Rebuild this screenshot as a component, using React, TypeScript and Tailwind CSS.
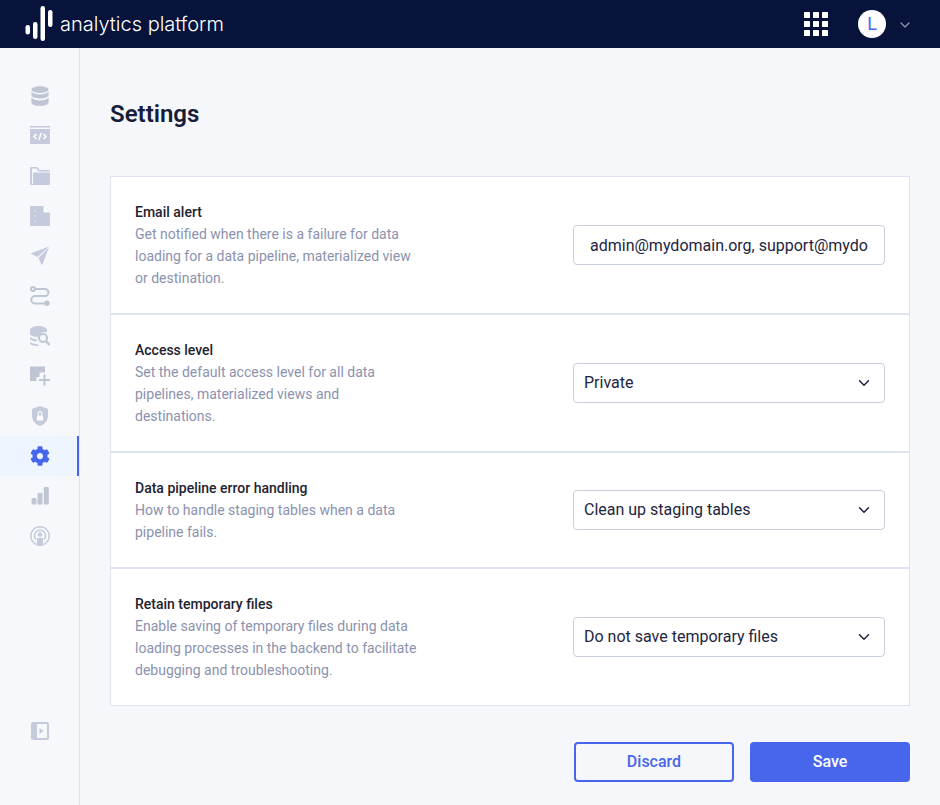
import { FaCog } from "react-icons/fa";
import { ChevronDown } from "lucide-react";

function DbIcon() {
  return (
    <svg width="20" height="20" viewBox="0 0 20 20" fill="#bfc5d2">
      <ellipse cx="10" cy="3.6" rx="8.6" ry="3.4" />
      <path d="M1.4 5.6c1.4 2 4.8 3 8.6 3s7.2-1 8.600-3v3.400c0 1.900-3.800 3.400-8.600 3.400S1.400 10.900 1.400 9z" />
      <path d="M1.400 11.600c1.400 2 4.800 3 8.600 3s7.200-1 8.600-3v4.800c0 1.900-3.800 3.400-8.600 3.400s-8.600-1.500-8.600-3.400z" />
    </svg>
  );
}

function CodeIcon() {
  return (
    <svg width="20" height="20" viewBox="0 0 20 20">
      <rect x="0" y="0" width="20" height="1.500" fill="#c5cadc" />
      <rect x="0" y="3" width="20" height="15" fill="#c5cadc" />
      <path d="M6.500 8 4 10.500 6.500 13M13.500 8 16 10.500 13.500 13M11.200 7 8.800 14" fill="none" stroke="#fff" strokeWidth="1.500" />
    </svg>
  );
}

function FolderIcon() {
  return (
    <svg width="20" height="20" viewBox="0 0 20 20" fill="#c5cadc">
      <path d="M1 1h6.500l2 3H19a1 1 0 0 1 1 1v.5H8.500l-2-3H2v-.5H1z" />
      <path d="M0 2a1 1 0 0 1 1-1h1v17h17a1 1 0 0 1-1 1H1a1 1 0 0 1-1-1z" />
      <path d="M3 6.500h16a1 1 0 0 1 1 1V18a1 1 0 0 1-1 1H3z" />
    </svg>
  );
}

function FileIcon() {
  return (
    <svg width="20" height="20" viewBox="0 0 20 20">
      <path d="M1.500 0H13l7 7v11.500a1.500 1.500 0 0 1-1.500 1.500h-17A1.500 1.500 0 0 1 0 18.500v-17A1.500 1.500 0 0 1 1.500 0z" fill="#c5cadc" />
      <path d="M13.500 0v6.500H20z" fill="#f7f8fc" />
      <path d="M14 1.500v4.500h4.500z" fill="#fff" />
      <rect x="4.600" y="4.600" width="1.100" height="1.100" fill="#fff" />
      <rect x="4.600" y="9.300" width="1.100" height="1.100" fill="#fff" />
      <rect x="4.600" y="14.400" width="1.100" height="1.100" fill="#fff" />
    </svg>
  );
}

function SendIcon() {
  return (
    <svg width="20" height="20" viewBox="0 0 20 20" fill="#c5cadc">
      <path d="M19 0.500 0.500 7.500l7 3.500L19 0.500zM19.200 1 8.500 12l3.500 7.500z" />
    </svg>
  );
}

function PipelineIcon() {
  return (
    <svg width="20" height="20" viewBox="0 0 20 20" fill="none" stroke="#bfc5d2" strokeWidth="2">
      <circle cx="3" cy="3" r="2" />
      <path d="M5 3h10a3.500 3.500 0 0 1 0 7H5a3.700 3.700 0 0 0 0 7.500h11" />
      <circle cx="17" cy="17.300" r="2.700" fill="#bfc5d2" stroke="none" />
    </svg>
  );
}

function SearchDbIcon() {
  return (
    <svg width="20" height="20" viewBox="0 0 20 20">
      <path d="M0 4c0-2.200 3.800-4 8.500-4S17 1.800 17 4v2.500a7 7 0 0 0-9 4.500C4 11 1.500 10 0 8.500z" fill="#c5cadc" />
      <path d="M0 11c1.500 1.300 3.500 2 6.500 2.300L7 15.500C4 15.500 1.500 14.500 0 13.500zM0 16c1.500 1 4 2 8 2.200l1 1.800c-5 0-9-1-9-2.500z" fill="#c5cadc" />
      <circle cx="13" cy="12" r="4" fill="none" stroke="#bfc5d2" strokeWidth="2" />
      <path d="m16 15 3.500 4" stroke="#bfc5d2" strokeWidth="2.500" />
    </svg>
  );
}

function AddTileIcon() {
  return (
    <svg width="20" height="20" viewBox="0 0 20 20">
      <path d="M0 0.500h15v6H9.500V11H6.500v4H0z" fill="#bfc5d2" />
      <path d="M14.500 8.500v11M9 14h11" stroke="#bfc5d2" strokeWidth="2" />
    </svg>
  );
}

function ShieldIcon() {
  return (
    <svg width="20" height="20" viewBox="0 0 20 20">
      <path d="M10 0 18 3v7c0 5-4 8.500-8 10-4-1.500-8-5-8-10V3z" fill="#c5cadc" />
      <rect x="7" y="9.500" width="6" height="5" rx="0.800" fill="#fff" />
      <path d="M8.200 9.500V7.300a1.800 1.800 0 0 1 3.600 0v2.200" fill="none" stroke="#fff" strokeWidth="1.200" />
    </svg>
  );
}

function BarsIcon() {
  return (
    <svg width="20" height="20" viewBox="0 0 20 20" fill="#bfc5d2">
      <rect x="1.500" y="12" width="5" height="6.500" rx="1.500" />
      <rect x="7.500" y="7" width="5" height="11.500" rx="1" />
      <rect x="13.800" y="1" width="5" height="17.500" rx="1" />
    </svg>
  );
}

function PodcastIcon() {
  return (
    <svg width="20" height="20" viewBox="0 0 20 20">
      <g fill="none" stroke="#c5cadc" strokeWidth="1.500">
        <path d="M6.500 18.500a9.200 9.200 0 1 1 7 0" />
        <path d="M6 13.500a5.500 5.500 0 1 1 8 0" />
      </g>
      <circle cx="10" cy="8.500" r="2.200" fill="#c5cadc" />
      <path d="M7 12h6v8H7z" fill="#c5cadc" />
    </svg>
  );
}

function CollapseIcon() {
  return (
    <svg width="20" height="20" viewBox="0 0 20 20">
      <rect x="1" y="1" width="18" height="18" rx="2" fill="#c5cadc" />
      <rect x="7" y="3" width="10" height="14" fill="#f7f8fc" />
      <path d="m9.500 7 4 3-4 3z" fill="#c5cadc" />
    </svg>
  );
}

const navIcons = [
  <DbIcon key="db" />,
  <CodeIcon key="code" />,
  <FolderIcon key="folder" />,
  <FileIcon key="file" />,
  <SendIcon key="send" />,
  <PipelineIcon key="pipeline" />,
  <SearchDbIcon key="searchdb" />,
  <AddTileIcon key="add" />,
  <ShieldIcon key="shield" />,
  <FaCog key="settings" size={20} color="#4766ec" />,
  <BarsIcon key="bars" />,
  <PodcastIcon key="podcast" />,
];

function Row({ title, lines, children }: { title: string; lines: string[]; children: React.ReactNode }) {
  return (
    <div className="flex items-center justify-between px-6 py-6 border-t-2 border-[#dfe3f0] first:border-t-0">
      <div>
        <div className="text-sm leading-[22px] font-medium text-[#1f2230]">{title}</div>
        {lines.map((l) => (
          <div key={l} className="text-sm leading-[22px] text-[#8b92ae]">{l}</div>
        ))}
      </div>
      {children}
    </div>
  );
}

function SelectBox({ value }: { value: string }) {
  return (
    <div className="w-[312px] h-10 flex items-center justify-between pl-[10px] pr-[11px] bg-white border border-[#c8cde0] rounded text-base text-[#1e2540]">
      <span>{value}</span>
      <ChevronDown size={18} strokeWidth={2} color="#1e2540" />
    </div>
  );
}

export default function App() {
  return (
    <div className="h-[805px] w-[940px] flex flex-col overflow-hidden bg-[#f6f7fb] font-['Roboto',sans-serif]">
      <header className="h-12 shrink-0 bg-[#07133a] flex items-center">
        <svg width="60" height="48" viewBox="0 0 60 48" className="shrink-0" fill="#fff">
          <rect x="25.500" y="25" width="4.500" height="9.500" rx="2.200" />
          <rect x="33" y="22" width="4.500" height="17" rx="2.200" />
          <rect x="40.500" y="6" width="4.500" height="35" rx="2.200" />
          <rect x="48" y="10" width="4.500" height="17" rx="2.200" />
        </svg>
        <span className="-mt-[1px] text-[20px] font-['Inter',sans-serif] font-light text-white">analytics platform</span>
        <div className="ml-auto flex items-center">
          <svg width="24" height="24" viewBox="0 0 24 24" fill="#fff">
            <rect x="0" y="0" width="6" height="6" rx="0.500" />
            <rect x="9" y="0" width="6" height="6" rx="0.500" />
            <rect x="18" y="0" width="6" height="6" rx="0.500" />
            <rect x="0" y="9" width="6" height="6" rx="0.500" />
            <rect x="9" y="9" width="6" height="6" rx="0.500" />
            <rect x="18" y="9" width="6" height="6" rx="0.500" />
            <rect x="0" y="18" width="6" height="6" rx="0.500" />
            <rect x="9" y="18" width="6" height="6" rx="0.500" />
            <rect x="18" y="18" width="6" height="6" rx="0.500" />
          </svg>
          <div className="ml-[30px] w-7 h-7 rounded-full bg-white flex items-center justify-center text-[#4766ec] text-lg font-normal">L</div>
          <ChevronDown className="ml-[11px] mr-[27px] mt-[2px]" size={16} strokeWidth={2} color="#8b92ae" />
        </div>
      </header>

      <div className="flex-1 flex min-h-0">
        <aside className="w-20 shrink-0 bg-[#f7f8fc] border-r border-[#dfe3f0] flex flex-col pt-7 pb-[64px]">
          {navIcons.map((icon, i) => (
            <div
              key={i}
              className={i === 9
                ? "h-10 pl-[30px] flex items-center bg-[#eff5ff] border-r-2 border-[#4766ec]"
                : "h-10 pl-[30px] flex items-center"}
            >
              {icon}
            </div>
          ))}
          <div className="mt-auto pl-[30px] flex items-center">
            <CollapseIcon />
          </div>
        </aside>

        <main className="flex-1 px-[30px]">
          <h1 className="mt-[50px] text-[24px] leading-8 font-semibold text-[#161d3a]">Settings</h1>
          <div className="mt-[46px] bg-white border border-[#dfe3f0]">
            <Row title="Email alert" lines={["Get notified when there is a failure for data", "loading for a data pipeline, materialized view", "or destination."]}>
              <input
                readOnly
                value="admin@mydomain.org, support@mydomain.org"
                className="w-[312px] h-10 px-4 bg-white border border-[#c8cde0] rounded text-base text-[#1e2540] outline-none"
              />
            </Row>
            <Row title="Access level" lines={["Set the default access level for all data", "pipelines, materialized views and", "destinations."]}>
              <SelectBox value="Private" />
            </Row>
            <Row title="Data pipeline error handling" lines={["How to handle staging tables when a data", "pipeline fails."]}>
              <SelectBox value="Clean up staging tables" />
            </Row>
            <Row title="Retain temporary files" lines={["Enable saving of temporary files during data", "loading processes in the backend to facilitate", "debugging and troubleshooting."]}>
              <SelectBox value="Do not save temporary files" />
            </Row>
          </div>
          <div className="mt-9 flex justify-end gap-4">
            <button className="w-40 h-10 rounded border-2 border-[#4766ec] text-[#4766ec] text-base font-medium">Discard</button>
            <button className="w-40 h-10 rounded bg-[#4766ec] text-white text-base font-medium">Save</button>
          </div>
        </main>
      </div>
    </div>
  );
}
